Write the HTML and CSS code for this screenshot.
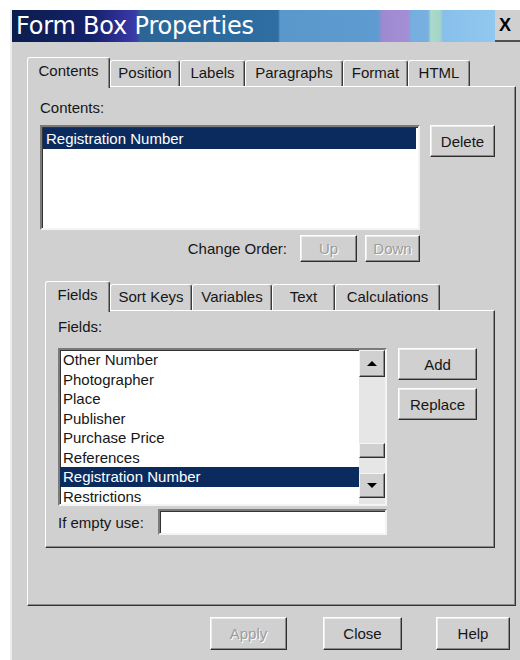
FILE: index.html
```html
<!DOCTYPE html>
<html lang="en">
<head>
<meta charset="utf-8">
<title>Form Box Properties</title>
<link rel="stylesheet" href="styles.css">
</head>
<body>
<div class="window">
  <div class="titlebar">
    <div class="title">Form Box Properties</div>
    <div class="close">X</div>
  </div>
  <div class="body">
    <div class="tabs">
      <div class="tab active w-contents">Contents</div>
      <div class="tab w-position">Position</div>
      <div class="tab w-labels">Labels</div>
      <div class="tab w-paragraphs">Paragraphs</div>
      <div class="tab w-format">Format</div>
      <div class="tab w-html">HTML</div>
    </div>
    <div class="panel">
      <div class="label">Contents:</div>
      <div class="row">
        <div class="listbox contents-list">
          <div class="item selected">Registration Number</div>
        </div>
        <button class="btn delete">Delete</button>
      </div>
      <div class="order-row">
        <span class="order-label">Change Order:</span>
        <button class="btn disabled up">Up</button>
        <button class="btn disabled down">Down</button>
      </div>

      <div class="tabs inner-tabs">
        <div class="tab active w-fields">Fields</div>
        <div class="tab w-sortkeys">Sort Keys</div>
        <div class="tab w-variables">Variables</div>
        <div class="tab w-text">Text</div>
        <div class="tab w-calc">Calculations</div>
      </div>
      <div class="panel inner-panel">
        <div class="label">Fields:</div>
        <div class="row">
          <div class="listbox fields-list">
            <div class="items">
              <div class="item">Other Number</div>
              <div class="item">Photographer</div>
              <div class="item">Place</div>
              <div class="item">Publisher</div>
              <div class="item">Purchase Price</div>
              <div class="item">References</div>
              <div class="item selected">Registration Number</div>
              <div class="item">Restrictions</div>
            </div>
            <div class="scrollbar">
              <div class="sb-btn sb-up"><span class="arrow-up"></span></div>
              <div class="sb-track track-top"></div>
              <div class="sb-thumb"></div>
              <div class="sb-track track-mid"></div>
              <div class="sb-btn sb-down"><span class="arrow-down"></span></div>
            </div>
          </div>
          <div class="side-buttons">
            <button class="btn side">Add</button>
            <button class="btn side">Replace</button>
          </div>
        </div>
        <div class="empty-row">
          <span class="empty-label">If empty use:</span>
          <div class="textbox"></div>
        </div>
      </div>
    </div>
    <div class="footer">
      <button class="btn disabled apply">Apply</button>
      <button class="btn close-btn">Close</button>
      <button class="btn help">Help</button>
    </div>
  </div>
</div>
</body>
</html>
```

FILE: styles.css
```css
* { box-sizing: border-box; }

body {
  margin: 0;
  background: #ffffff;
  font-family: "Liberation Sans", Arial, sans-serif;
  font-size: 15px;
  color: #161616;
}

.window {
  margin: 10px 0 0 10px;
  width: 510px;
  height: 650px;
  background: #d0d0d0;
  border-left: 2px solid #ececec;
  display: flex;
  flex-direction: column;
  overflow: hidden;
}

/* caption bar */
.titlebar {
  height: 32px;
  display: flex;
  flex: none;
}
.title {
  width: 483px;
  height: 32px;
  padding-left: 4px;
  color: #ffffff;
  font-family: "DejaVu Sans", Verdana, sans-serif;
  font-size: 24px;
  line-height: 32px;
  letter-spacing: -0.2px;
  white-space: nowrap;
  background: linear-gradient(to right,
    #0b1d4e 0px, #14226a 80px, #2f2f96 108px, #3a3ca8 124px,
    #2b6596 128px, #2e6ea2 266px,
    #5a97cb 268px, #5e9bd0 366px,
    #9c8ad0 370px, #a48fd4 396px,
    #76aee0 399px, #78b0e0 416px,
    #a9dacb 419px, #a4d6c8 428px,
    #86c0ea 431px, #92c8ef 483px);
}
.close {
  flex: 1;
  height: 32px;
  background: #d0d0d0;
  border-bottom: 2px solid #505050;
  font-family: "Liberation Sans", Arial, sans-serif;
  font-weight: bold;
  font-size: 18px;
  line-height: 30px;
  padding-left: 4px;
  color: #000;
}

.body {
  padding: 15px 0 0 15px;
  display: flex;
  flex-direction: column;
}

/* tab strips */
.tabs {
  display: flex;
  height: 29px;
  align-items: flex-end;
  position: relative;
  z-index: 1;
}
.tab {
  flex: none;
  height: 26px;
  border: 1px solid;
  border-color: #ffffff #3a3a3a transparent #ffffff;
  border-bottom: none;
  border-radius: 3px 3px 0 0;
  box-shadow: inset -1px 0 0 #8a8a8a;
  text-align: center;
  line-height: 24px;
  white-space: nowrap;
  background: #d0d0d0;
}
.tab.active {
  height: 31px;
  margin-bottom: -2px;
  line-height: 26px;
}
.w-contents { width: 83px; }
.w-position { width: 70px; }
.w-labels { width: 65px; }
.w-paragraphs { width: 98px; }
.w-format { width: 65px; }
.w-html { width: 62px; }

.w-fields { width: 65px; }
.w-sortkeys { width: 82px; }
.w-variables { width: 80px; }
.w-text { width: 63px; }
.w-calc { width: 105px; }

/* tab pages */
.panel {
  width: 489px;
  height: 520px;
  border: 1px solid;
  border-color: #ffffff #333333 #333333 #ffffff;
  box-shadow: inset -1px -1px 0 #8a8a8a;
  padding: 13px 0 0 12px;
}
.label {
  height: 16px;
  line-height: 16px;
  margin-bottom: 9px;
}
.row {
  display: flex;
  align-items: flex-start;
}

.listbox {
  background: #ffffff;
  border: 2px solid;
  border-color: #7a7a7a #f4f4f4 #f4f4f4 #7a7a7a;
  box-shadow: inset 1px 1px 0 #333333;
}
.contents-list {
  width: 380px;
  height: 105px;
  padding: 1px 2px 0 1px;
}
.item {
  height: 19.5px;
  line-height: 19.5px;
  padding-left: 3px;
  white-space: nowrap;
  color: #161616;
}
.contents-list .item { height: 21px; line-height: 21px; }
.item.selected {
  background: #0b2b5e;
  color: #ffffff;
}

.btn {
  font-family: "Liberation Sans", Arial, sans-serif;
  font-size: 15px;
  color: #161616;
  background: #d0d0d0;
  padding: 0;
  margin: 0;
  border: 1px solid;
  border-color: #ffffff #2e2e2e #2e2e2e #ffffff;
  box-shadow: inset -1px -1px 0 #8a8a8a, inset 1px 1px 0 #ececec;
  border-radius: 0;
  display: flex;
  align-items: center;
  justify-content: center;
}
.btn.disabled {
  color: #9c9c9c;
  text-shadow: 1px 1px 0 #ffffff;
}
.delete {
  width: 65px;
  height: 32px;
  margin-left: 10px;
}

.order-row {
  width: 380px;
  height: 27px;
  margin-top: 5px;
  display: flex;
  justify-content: flex-end;
  align-items: center;
}
.order-label { margin-right: 13px; }
.up { width: 57px; height: 27px; margin-right: 8px; }
.down { width: 55px; height: 27px; }

.inner-tabs {
  margin-top: 18px;
  margin-left: 5px;
  height: 30px;
}
.inner-panel {
  width: 450px;
  height: 238px;
  margin-left: 5px;
  padding: 8px 0 0 12px;
}
.inner-panel .label { margin-bottom: 13px; }

.fields-list {
  width: 329px;
  height: 158px;
  display: flex;
  overflow: hidden;
}
.items {
  flex: 1;
  overflow: hidden;
}
.scrollbar {
  width: 26px;
  display: flex;
  flex-direction: column;
  background: #e6e6e6;
}
.sb-btn, .sb-thumb {
  background: #d0d0d0;
  border: 1px solid;
  border-color: #f4f4f4 #2e2e2e #2e2e2e #f4f4f4;
  box-shadow: inset -1px -1px 0 #8a8a8a;
  display: flex;
  align-items: center;
  justify-content: center;
}
.sb-up { height: 27px; }
.track-top { height: 66px; }
.sb-thumb { height: 15px; }
.track-mid { height: 15px; }
.sb-down { height: 25px; }
.arrow-up {
  width: 0; height: 0;
  border-left: 5px solid transparent;
  border-right: 5px solid transparent;
  border-bottom: 5px solid #000;
}
.arrow-down {
  width: 0; height: 0;
  border-left: 5px solid transparent;
  border-right: 5px solid transparent;
  border-top: 5px solid #000;
}

.side-buttons {
  margin-left: 11px;
  display: flex;
  flex-direction: column;
  gap: 8px;
}
.side { width: 79px; height: 32px; }

.empty-row {
  margin-top: 3px;
  display: flex;
  align-items: center;
  height: 26px;
}
.empty-label { width: 100px; }
.textbox {
  width: 229px;
  height: 26px;
  background: #ffffff;
  border: 2px solid;
  border-color: #7a7a7a #f4f4f4 #f4f4f4 #7a7a7a;
  box-shadow: inset 1px 1px 0 #333333;
}

.footer {
  display: flex;
  margin-top: 11px;
}
.apply { width: 77px; height: 33px; margin-left: 183px; }
.close-btn { width: 79px; height: 33px; margin-left: 36px; }
.help { width: 74px; height: 33px; margin-left: 34px; }
```
